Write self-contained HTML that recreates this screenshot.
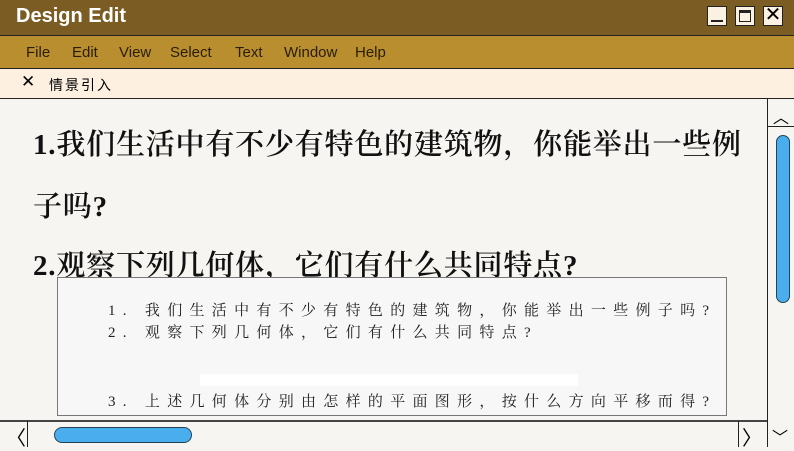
<!DOCTYPE html>
<html><head><meta charset="utf-8"><style>
body{margin:0;width:794px;height:447px;overflow:hidden;position:relative;background:#f7f5f2;font-family:"Liberation Sans","Noto Sans CJK SC",sans-serif}
.a{position:absolute}
.title{left:0;top:0;width:794px;height:35px;background:#7b5d24;border-bottom:1px solid #222}
.title span{position:absolute;left:16px;top:5px;color:#fff;font-weight:bold;font-size:20px}
.btn{position:absolute;top:6px;width:20px;height:20px;background:#fbf1e2;border:1px solid #222;box-sizing:border-box}
.menu{left:0;top:36px;width:794px;height:32px;background:#b98e2f;border-bottom:1px solid #222}
.menu span{position:absolute;top:8px;font-size:15px;color:#2a1d08}
.tab{left:0;top:69px;width:794px;height:29px;background:#fdf0e1;border-bottom:1px solid #222}
.main{left:33px;font-family:"Liberation Serif","Noto Serif CJK SC",serif;font-size:29px;color:#111;white-space:nowrap;font-weight:600;letter-spacing:0.8px}
.box{left:57px;top:277px;width:668px;height:137px;border:1px solid #777;background:#f7f7f7;font-family:"Liberation Serif","Noto Serif CJK SC",serif;font-size:15px;color:#222}
.box div{position:absolute;left:50px;letter-spacing:7.3px;white-space:nowrap}
</style></head><body>
<div class="a title"><span>Design Edit</span>
<div class="btn" style="left:707px"><div class="a" style="left:3px;top:13px;width:12px;height:2px;background:#222"></div></div>
<div class="btn" style="left:735px"><div class="a" style="left:3px;top:3px;width:12px;height:12px;border:1px solid #222;border-top:3px solid #222;box-sizing:border-box"></div></div>
<div class="btn" style="left:763px;font-size:20px;line-height:17px;text-align:center">✕</div>
</div>
<div class="a menu"><span style="left:26px">File</span><span style="left:72px">Edit</span><span style="left:119px">View</span><span style="left:170px">Select</span><span style="left:235px">Text</span><span style="left:284px">Window</span><span style="left:355px">Help</span></div>
<div class="a tab"><span class="a" style="left:21px;top:3px;font-size:17px">✕</span><span class="a" style="left:49px;top:6px;font-size:14px;letter-spacing:2px">情景引入</span></div>
<div class="a main" style="top:122px"><b>1.</b>我们生活中有不少有特色的建筑物，你能举出一些例</div>
<div class="a main" style="top:184px">子吗<b>?</b></div>
<div class="a main" style="top:243px"><b>2.</b>观察下列几何体，它们有什么共同特点<b>?</b></div>
<div class="a box">
<div style="top:21px">1. 我们生活中有不少有特色的建筑物，你能举出一些例子吗?</div>
<div style="top:43px">2. 观察下列几何体，它们有什么共同特点?</div>
<div style="left:142px;top:96px;width:378px;height:12px;background:#fff;letter-spacing:0"></div>
<div style="top:112px">3. 上述几何体分别由怎样的平面图形，按什么方向平移而得?</div>
</div>
<div class="a" style="left:767px;top:99px;width:1px;height:348px;background:#222"></div>
<div class="a" style="left:767px;top:126px;width:27px;height:1px;background:#222"></div>
<div class="a" style="left:773px;top:104px;font-size:16px">︿</div>
<div class="a" style="left:776px;top:135px;width:12px;height:166px;background:#4aaeee;border:1px solid #245;border-radius:7px"></div>
<div class="a" style="left:0;top:420px;width:767px;height:2px;background:#444"></div>
<div class="a" style="left:27px;top:421px;width:1px;height:26px;background:#222"></div>
<div class="a" style="left:738px;top:421px;width:1px;height:26px;background:#222"></div>
<div class="a" style="left:6px;top:422px;font-size:20px">〈</div>
<div class="a" style="left:742px;top:422px;font-size:20px">〉</div>
<div class="a" style="left:772px;top:424px;font-size:16px">﹀</div>
<div class="a" style="left:54px;top:427px;width:136px;height:14px;background:#4aaeee;border:1px solid #245;border-radius:8px"></div>
</body></html>
